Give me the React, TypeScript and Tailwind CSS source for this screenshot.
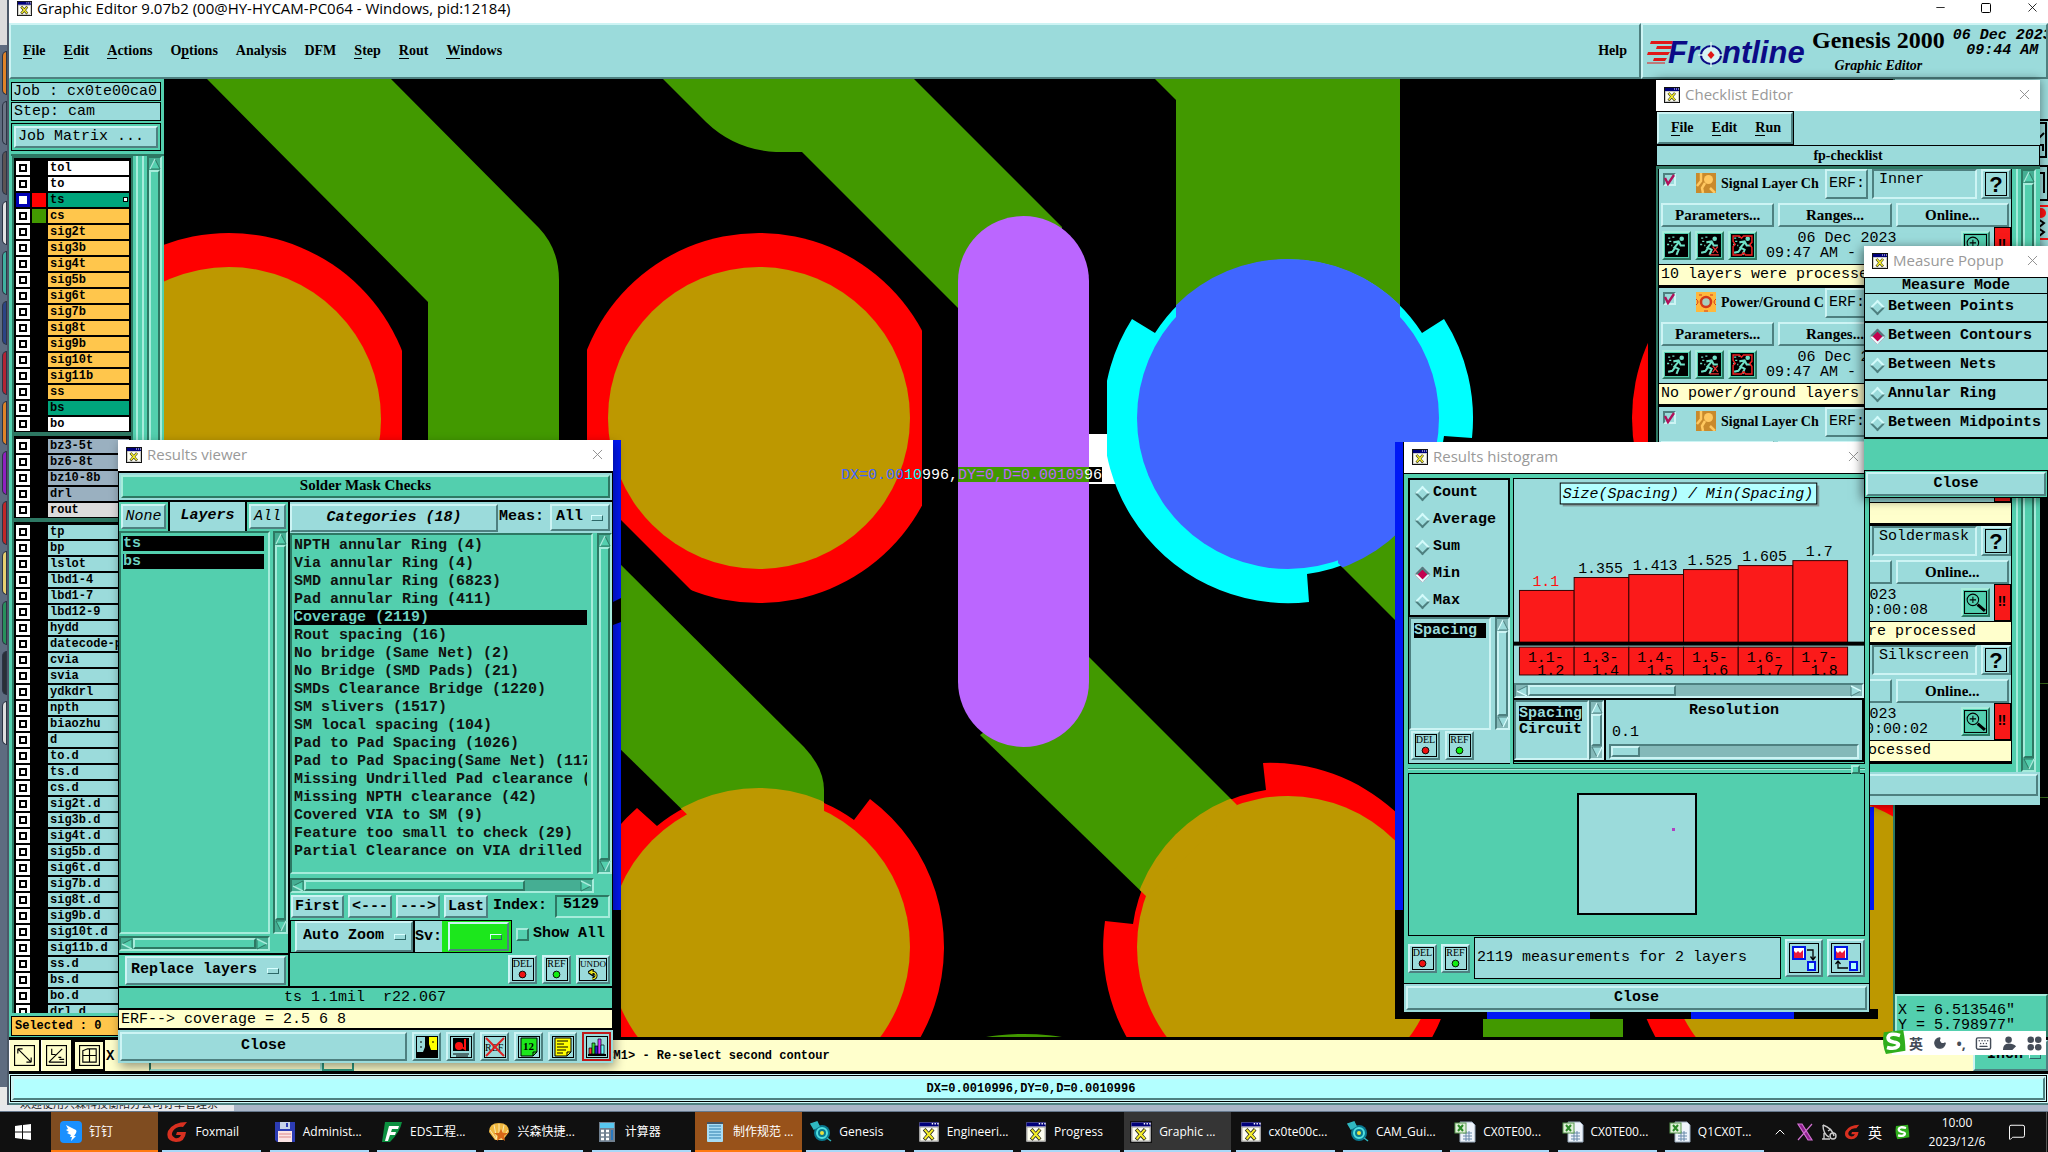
import React from 'react';
import { ChevronUp, Minus, Square, X, Moon, Keyboard, MessageSquare } from 'lucide-react';
import clsx from 'clsx';

const mono = "font-['Liberation_Mono','Noto_Sans_CJK_SC',monospace]";
const serif = "font-['Liberation_Serif',serif]";
const sans = "font-['Open_Sans','Noto_Sans_CJK_SC',sans-serif]";

const raised = 'border-2 border-t-[#cdf4f4] border-l-[#cdf4f4] border-r-[#4e8080] border-b-[#4e8080]';
const sunken = 'border-2 border-t-[#4e8080] border-l-[#4e8080] border-r-[#cdf4f4] border-b-[#cdf4f4]';
const raisedGreen = 'border-2 border-t-[#a6ecdb] border-l-[#a6ecdb] border-r-[#2d7863] border-b-[#2d7863]';
const sunkenGreen = 'border-2 border-t-[#2d7863] border-l-[#2d7863] border-r-[#a6ecdb] border-b-[#a6ecdb]';

/* ---------- small shared pieces ---------- */

const XIcon = ({ className = 'h-4 w-4' }: { className?: string }) => (
  <svg viewBox="0 0 16 16" className={clsx('shrink-0', className)}>
    <rect x="0.5" y="0.5" width="15" height="15" fill="#fff" stroke="#111" />
    <rect x="1" y="1" width="14" height="3" fill="#00007b" />
    <path d="M10 2h1M12 2h1M14 2h1" stroke="#fff" />
    <rect x="1.5" y="4.5" width="13" height="10" fill="#fffff0" stroke="#999" strokeWidth="0.5" />
    <path d="M4.5 6l6.5 7.5M11 6l-6.5 7.5" stroke="#222" strokeWidth="2.6" />
    <path d="M4.8 6.3l6 6.8M10.8 6.3l-6 6.8" stroke="#f5ee28" strokeWidth="1.5" />
  </svg>
);

const TitleBar = ({ title }: { title: string }) => (
  <div className={clsx(sans, 'flex h-[31px] items-center bg-white pr-[7px] pb-[2px] pl-2 text-[15px] text-[#999]')}>
    <XIcon />
    <span className="flex-1 pl-[5px] whitespace-nowrap">{title}</span>
    <button aria-label={`Close ${title}`} className="text-[#8a8a8a]">
      <X size={17} strokeWidth={1.3} />
    </button>
  </div>
);

const Arrow = ({ dir, green }: { dir: 'up' | 'down' | 'left' | 'right'; green?: boolean }) => {
  const rot = { up: 0, right: 90, down: 180, left: 270 }[dir];
  return (
    <svg viewBox="0 0 12 12" className="h-3 w-3 shrink-0">
      <g transform={`rotate(${rot} 6 6)`}>
        <path d="M6 1L11 11H1Z" fill={green ? '#53cfae' : '#9bdbdb'} stroke={green ? '#2d7863' : '#4e8080'} />
        <path d="M6 1L1 11" stroke={green ? '#a6ecdb' : '#d8ffff'} strokeWidth="1.4" />
      </g>
    </svg>
  );
};

const VScroll = ({ green }: { green?: boolean }) => (
  <div className={clsx('flex w-[15px] shrink-0 flex-col items-center', green ? 'bg-[#45ae93]' : 'bg-[#84b9b9]', green ? sunkenGreen : sunken)}>
    <Arrow dir="up" green={green} />
    <div className={clsx('w-[11px] flex-1', green ? raisedGreen : raised, green ? 'bg-[#53cfae]' : 'bg-[#9bdbdb]')} />
    <Arrow dir="down" green={green} />
  </div>
);

const HScroll = ({ green, thumb }: { green?: boolean; thumb: string }) => (
  <div className={clsx('flex h-[15px] items-center', green ? 'bg-[#45ae93]' : 'bg-[#84b9b9]', green ? sunkenGreen : sunken)}>
    <Arrow dir="left" green={green} />
    <div className="h-[11px] flex-1">
      <div className={clsx('h-full', thumb, green ? raisedGreen : raised, green ? 'bg-[#53cfae]' : 'bg-[#9bdbdb]')} />
    </div>
    <Arrow dir="right" green={green} />
  </div>
);

const OptionMenu = ({ label, value, className }: { label: string; value: string; className?: string }) => (
  <div className={clsx('relative', raised, className)}>
    <select aria-label={label} className="h-full w-full appearance-none bg-transparent pl-1 outline-none">
      <option>{value}</option>
    </select>
    <span className="pointer-events-none absolute top-1/2 right-[5px] h-[6px] w-3 -translate-y-1/2 border border-t-[#d8ffff] border-r-[#2d6868] border-b-[#2d6868] border-l-[#d8ffff]" />
  </div>
);

const DotButton = ({ text, color }: { text: string; color: string }) => (
  <button className={clsx(raised, serif, 'flex h-[29px] w-[29px] items-center justify-center bg-[#9bdbdb]')}>
    <span className="flex h-[23px] w-[22px] flex-col items-center border border-black text-[10px] leading-[10px]">
      {text}
      <svg viewBox="0 0 8 8" className="mt-px h-[9px] w-[9px]">
        <circle cx="4" cy="4" r="3" fill={color} stroke="#000" strokeWidth="0.8" />
      </svg>
    </span>
  </button>
);

const Radio = ({ name, label, checked }: { name: string; label: string; checked?: boolean }) => (
  <label className="flex h-full items-center gap-[5px] pl-[7px] whitespace-nowrap">
    <input
      type="radio"
      name={name}
      defaultChecked={checked}
      className="h-[11px] w-[11px] rotate-45 appearance-none border-2 border-t-[#d4fbfb] border-r-[#4e8080] border-b-[#4e8080] border-l-[#d4fbfb] checked:border-t-[#4e8080] checked:border-r-[#d4fbfb] checked:border-b-[#f4ffff] checked:border-l-[#4e8080] checked:bg-[#c4004e]"
    />
    {label}
  </label>
);

/* ---------- main window ---------- */

const menus: [string, number][] = [
  ['File', 0], ['Edit', 0], ['Actions', 0], ['Options', 1], ['Analysis', -1], ['DFM', -1], ['Step', 0], ['Rout', 0], ['Windows', 0],
];

const MenuLabel = ({ text, at }: { text: string; at: number }) =>
  at < 0 ? (
    <>{text}</>
  ) : (
    <>
      {text.slice(0, at)}
      <span className="border-b border-black">{text[at]}</span>
      {text.slice(at + 1)}
    </>
  );

const Logo = () => (
  <svg viewBox="0 0 162 30" className="mt-3 ml-1 h-[30px] w-[162px] shrink-0">
    <path d="M4 4h24l-2 3H3zM10 9h16l-2 3H9zM1 15h22l-2 3H0zM7 21h13l-2 3H6z" fill="#e01818" />
    <path d="M0 26h18" stroke="#e01818" />
    <g fill="#0b0b86" className="font-['Liberation_Sans',sans-serif] text-[31px] font-bold italic">
      <text x="21" y="26">Fr</text>
      <text x="75" y="26">ntline</text>
    </g>
    <ellipse cx="64" cy="18" rx="10" ry="9" fill="#d6f4f4" stroke="#0b0b86" strokeWidth="2" />
    <path d="M64 5v8M64 23v7M51 18h6M71 18h5" stroke="#d6f4f4" strokeWidth="1.5" />
    <path d="M64 14l3.500 4-3.500 4-3.500-4z" fill="#e01818" />
  </svg>
);

type Layer = { name: string; bg: string; swatch?: string; active?: boolean };
const W = 'bg-white';
const O = 'bg-[#ffc64c]';
const G = 'bg-[#00a57c]';
const B = 'bg-[#9ab0c0]';
const T = 'bg-[#9bdbdb]';
const board: Layer[] = [
  { name: 'tol', bg: W }, { name: 'to', bg: W },
  { name: 'ts', bg: G, swatch: 'bg-[#ff0000]', active: true },
  { name: 'cs', bg: O, swatch: 'bg-[#429900]' },
  ...['sig2t', 'sig3b', 'sig4t', 'sig5b', 'sig6t', 'sig7b', 'sig8t', 'sig9b', 'sig10t', 'sig11b', 'ss'].map((name) => ({ name, bg: O })),
  { name: 'bs', bg: G }, { name: 'bo', bg: W },
];
const drills: Layer[] = [
  ...['bz3-5t', 'bz6-8t', 'bz10-8b', 'drl'].map((name) => ({ name, bg: B })),
  { name: 'rout', bg: 'bg-[#dcdcdc]' },
];
const misc: Layer[] = [
  'tp', 'bp', 'lslot', 'lbd1-4', 'lbd1-7', 'lbd12-9', 'hydd', 'datecode-p', 'cvia', 'svia', 'ydkdrl', 'npth', 'biaozhu', 'd',
  'to.d', 'ts.d', 'cs.d', 'sig2t.d', 'sig3b.d', 'sig4t.d', 'sig5b.d', 'sig6t.d', 'sig7b.d', 'sig8t.d', 'sig9b.d', 'sig10t.d',
  'sig11b.d', 'ss.d', 'bs.d', 'bo.d', 'drl.d',
].map((name) => ({ name, bg: T }));

const LayerGroup = ({ layers }: { layers: Layer[] }) => (
  <ul className="flex flex-col gap-px border-2 border-[#2d7863] bg-black p-[2px] pb-px">
    {layers.map((l) => (
      <li key={l.name} className="flex h-[15px] items-center gap-[2px]">
        <input
          type="checkbox"
          aria-label={l.name}
          className={clsx(
            'h-[14px] w-[14px] shrink-0 appearance-none border-[3px] bg-white',
            l.active ? 'border-[#0000b4]' : 'border-white shadow-[inset_0_0_0_2px_#000]',
          )}
        />
        <span className={clsx('h-[14px] w-[14px] shrink-0', l.swatch)} />
        <button className={clsx('flex h-[14px] flex-1 items-center justify-between overflow-hidden pl-[2px] text-left text-[12px] leading-[14px] font-bold', l.bg)}>
          {l.name}
          {l.active && <span className="mr-px h-[5px] w-[5px] border border-black bg-white" />}
        </button>
      </li>
    ))}
  </ul>
);

const LayerPanel = () => (
  <aside className={clsx(mono, 'flex w-[155px] shrink-0 flex-col bg-[#53cfae] pt-[3px] pl-[2px]')}>
    <div className="mr-[3px] flex flex-col gap-px text-[15px] leading-[17px] whitespace-nowrap">
      <div className="border border-black bg-[#9bdbdb] pl-px">Job : cx0te00ca0</div>
      <div className="border border-black bg-[#9bdbdb] pl-[2px]">Step: cam</div>
      <div className="mt-px border border-black p-[2px]">
        <button className={clsx(raised, 'h-[22px] w-full bg-[#9bdbdb] pl-[2px] text-left leading-[18px]')}>Job Matrix ...</button>
      </div>
    </div>
    <div className="mt-[3px] flex min-h-0 flex-1 overflow-hidden border-t-2 border-[#2d7863]">
      <div className="flex w-[122px] flex-col overflow-hidden pl-px">
        <LayerGroup layers={board} />
        <LayerGroup layers={drills} />
        <LayerGroup layers={misc} />
      </div>
      <div className="mx-[3px] w-2 border-x-2 border-[#a6ecdb]" />
      <VScroll green />
    </div>
    <div className="mt-[3px] mb-[1px] border border-black bg-[#ffc64c] pl-[3px] text-[12px] leading-[18px] font-bold">Selected : 0</div>
  </aside>
);

const Canvas = () => (
  <svg viewBox="164 79 1729 958" preserveAspectRatio="xMinYMin slice" className="h-full min-w-0 flex-1 bg-black">
    <defs>
      <clipPath id="left-pad"><rect x="164" y="79" width="238" height="600" /></clipPath>
      <clipPath id="mid-pad"><path d="M587 79H922V700H801L587 486Z" /></clipPath>
      <clipPath id="blue-pad"><rect x="1107" y="200" width="400" height="500" /></clipPath>
      <clipPath id="traces">
        <path d="M1176 79H1400V330H1176Z" />
        <path d="M1338 563L1420 645V480H1338Z" />
        <path d="M613 557L804 747Q824 768 824 790V830H703L613 742Z" />
        <path d="M1089 657L1237 805L1147 897L980 735Z" />
      </clipPath>
    </defs>

    <g fill="#429900">
      <path d="M207 79H391L539 228Q559 249 559 280V700H428V302Z" />
      <path d="M663 79H914L1062 227V330H980L802 152H776Q735 150 706 122Z" />
      <path d="M1155 79H1400V330H1176V100Z" />
      <path d="M1338 563L1420 645V480H1338Z" />
      <path d="M613 557L804 747Q824 768 824 790V830H703L613 742Z" />
      <path d="M1089 657L1237 805L1147 897L980 735Z" />
      <ellipse cx="1024" cy="1050" rx="65" ry="16" />
      <rect x="1483" y="1000" width="140" height="40" />
    </g>

    <g fill="#f00">
      <circle cx="229" cy="419" r="186" clipPath="url(#left-pad)" />
      <circle cx="759" cy="418" r="185" clipPath="url(#mid-pad)" />
      <circle cx="1817" cy="418" r="185" />
      <circle cx="1817" cy="947" r="185" />
      <path d="M870 799A185 185 0 0 1 759 1132A185 185 0 0 1 637 808L657 826A158 158 0 0 1 686 807L704 830H824V803A158 158 0 0 1 854 820Z" />
      <path d="M1263 763A185 185 0 0 1 1288 1132A185 185 0 0 1 1105 921L1133 924A158 158 0 0 1 1266 790Z" />
    </g>
    <g fill="#bd9800">
      <circle cx="229" cy="419" r="152" />
      <circle cx="759" cy="418" r="151" />
      <circle cx="759" cy="947" r="151" />
      <circle cx="1288" cy="947" r="151" />
      <circle cx="1817" cy="947" r="151" />
      <g clipPath="url(#traces)">
        <circle cx="759" cy="947" r="159" />
        <circle cx="1288" cy="947" r="159" />
      </g>
    </g>

    <rect x="1089" y="434" width="50" height="50" fill="#fff" />
    <g clipPath="url(#blue-pad)">
      <path d="M1132 319A185 185 0 0 0 1309 602L1307 574A158 158 0 0 0 1444 436L1472 438A185 185 0 0 0 1444 319L1422 333A158 158 0 0 0 1155 333Z" fill="#0ff" />
    </g>
    <circle cx="1288" cy="418" r="151" fill="#4066ff" />
    <circle cx="1288" cy="418" r="159" fill="#4066ff" clipPath="url(#traces)" />

    <rect x="958" y="216" width="131" height="531" rx="65.500" fill="#bb66ff" />
    <rect x="958" y="467" width="131" height="15" fill="#429900" />
    <rect x="1089" y="467" width="13" height="15" fill="#000" />
    <text x="841" y="479" className="font-['Liberation_Mono',monospace] text-[15px]" fill="#4066ff">
      DX=0.00<tspan fill="#0ff">10</tspan><tspan fill="#fff">996,</tspan>
      <tspan x="958" fill="#bb66ff">DY=0,D=0.00109</tspan><tspan fill="#fff">96</tspan>
    </text>

    {/* drag frames left behind the floating windows */}
    <path d="M613 440H621V1037H613ZM1395 910H1403V1011H1878V798H1870V1019H1395ZM1870 790H1878V1019H1870ZM1648 79H1656V460H1648Z" fill="#000" />
    <path d="M1395 1009H1878V1019H1395Z" fill="#000" />
    <path d="M613 440H621V598L613 602ZM613 625L621 622V910H613ZM1395 442H1403V910H1395ZM1870 807H1874V910H1870ZM1487 1011H1590V1019H1487ZM1691 1011H1794V1019H1691Z" fill="#0018f5" />
  </svg>
);

const SidePanel = () => (
  <aside className={clsx(mono, 'flex w-[155px] shrink-0 flex-col border-l-2 border-[#2d7863] bg-[#9bdbdb]')}>
    <div className="flex h-[180px] flex-col items-end">
      <div className="h-[42px] w-full border-b-2 border-black" />
      <svg viewBox="0 0 10 120" className="h-[120px] w-[10px]">
        <g fill="none" stroke="#000" strokeWidth="2">
          <path d="M0 2h8v34h-8M0 18l6-6M0 24h5v6M0 45h10v34H0M0 52h6v20M0 98l6 4-6 5M0 107l6 4-6 5" />
        </g>
        <path d="M0 85h10M0 118h10" stroke="#f11" strokeWidth="2" />
        <circle cx="3" cy="92" r="5" fill="#f11" />
      </svg>
    </div>
    <div className="flex-1 bg-black pt-[424px]">
      <div className="mb-[113px] border-t border-[#3a6a1a]" />
      <div className="border-t border-[#3a6a1a]" />
    </div>
    <div className={clsx(raisedGreen, 'h-[43px] bg-[#53cfae] pt-[7px] pl-px text-[15px] leading-[15px] whitespace-pre')}>
      <div>X = 6.513546"</div>
      <div>Y = 5.798977"</div>
    </div>
  </aside>
);

const toolIcons = [
  'M4 4L18 18M4 4h5M4 4v5M18 18h-5M18 18v-5',
  'M3 18h16M3 18L17 4M6 4v6h4M13 13h3M14 15h5',
  'M4 6l5-2h9v14H4zM11 4v14M4 11h14',
];

const MessageRow = () => (
  <div className={clsx(mono, 'flex h-[37px] items-stretch border-y-[3px] border-black bg-[#ffffcc] text-[12px] font-bold')}>
    {toolIcons.map((d, i) => (
      <button
        key={d}
        aria-label={`Tool ${i + 1}`}
        className={clsx('flex w-8 items-center justify-center border-r-2 border-black', i === 2 ? 'border-2 border-[#2d9a80]' : 'border-l border-l-white')}
      >
        <svg viewBox="0 0 22 22" className="h-[21px] w-[21px]" fill="none" stroke="#000" strokeWidth="1.2">
          <rect x="0.6" y="0.600" width="20.800" height="20.800" />
          <path d={d} />
        </svg>
      </button>
    ))}
    <label htmlFor="coord" className="pl-px text-[14px] leading-[33px]">X</label>
    <input id="coord" className={clsx(sunkenGreen, 'ml-[35px] w-[173px] bg-[#ffffcc]')} />
    <button aria-label="Apply" className="w-8 border-2 border-[#2d9a80]">—</button>
    <p className="flex-1 truncate pl-[252px] leading-[33px]">&lt;M1&gt; - Re-select second contour</p>
    <OptionMenu label="Units" value="Inch" className="w-[75px] bg-[#53cfae] pl-2 text-[15px]" />
  </div>
);

const MainWindow = () => (
  <section className="flex min-w-0 flex-1 flex-col">
    <header className={clsx(sans, 'flex h-[23px] items-center bg-white pr-2 pl-2 text-[15px] leading-none text-black')}>
      <XIcon className="mb-[7px] h-[15px] w-[15px]" />
      <h1 className="mb-2 flex-1 pl-[5px] leading-[20px]">Graphic Editor 9.07b2 (00@HY-HYCAM-PC064 - Windows, pid:12184)</h1>
      <div className="mb-2 flex gap-[33px]">
        <button aria-label="Minimize"><Minus size={13} strokeWidth={1.5} /></button>
        <button aria-label="Maximize"><Square size={12} strokeWidth={2} /></button>
        <button aria-label="Close"><X size={15} strokeWidth={1.3} /></button>
      </div>
    </header>
    <div className={clsx(serif, 'flex h-14 bg-[#9bdbdb] text-[14px] font-bold')}>
      <nav className={clsx(raised, 'flex min-w-0 flex-1 items-center gap-[18px] px-3 pb-[2px]')}>
        {menus.map(([text, at]) => (
          <button key={text}><MenuLabel text={text} at={at} /></button>
        ))}
        <button className="ml-auto">Help</button>
      </nav>
      <div className={clsx(raised, 'flex w-[407px] shrink-0 overflow-hidden')}>
        <Logo />
        <div className="ml-[3px] text-center whitespace-nowrap">
          <div className="text-[24px] leading-[31px]">Genesis 2000</div>
          <div className="text-[14px] leading-[20px] italic">Graphic Editor</div>
        </div>
        <div className={clsx(mono, 'ml-[8px] pt-[3px] text-center text-[15px] leading-[15px] whitespace-nowrap italic')}>
          06 Dec 2023
          <br />
          09:44 AM
        </div>
      </div>
    </div>
    <div className="flex min-h-0 flex-1">
      <LayerPanel />
      <Canvas />
      <SidePanel />
    </div>
    <MessageRow />
    <footer className={clsx(mono, 'h-[31px] border-b-2 border-[#4e8080] bg-[#cffafa] p-px')}>
      <div className="h-full border border-black p-px">
        <div className={clsx(raised, 'flex h-full items-center justify-center bg-[#b3ffff] pl-[5px] text-[12px] font-bold')}>DX=0.0010996,DY=0,D=0.0010996</div>
      </div>
    </footer>
  </section>
);

/* ---------- results viewer ---------- */

const categories = [
  'NPTH annular Ring (4)', 'Via annular Ring (4)', 'SMD annular Ring (6823)', 'Pad annular Ring (411)', 'Coverage (2119)',
  'Rout spacing (16)', 'No bridge (Same Net) (2)', 'No Bridge (SMD Pads) (21)', 'SMDs Clearance Bridge (1220)', 'SM slivers (1517)',
  'SM local spacing (104)', 'Pad to Pad Spacing (1026)', 'Pad to Pad Spacing(Same Net) (117)', 'Missing Undrilled Pad clearance (12)',
  'Missing NPTH clearance (42)', 'Covered VIA to SM (9)', 'Feature too small to check (29)', 'Partial Clearance on VIA drilled',
];

const footerIcons: { name: string; art: React.ReactNode }[] = [
  { name: 'Contrast', art: <><path d="M11 1h10v20H11z" fill="#ff0" /><path d="M9 1h4v7l2 6h6v7H1v-5h6l2-5z" fill="#000" /><path d="M4 6h2M4 11h2M16 6h2" stroke="#000" /></> },
  { name: 'Snapshot', art: <><path d="M3 2h16v13H3z" fill="#000" /><circle cx="9" cy="10" r="4" fill="#f11" /><path d="M15 3v10l-5-3" stroke="#f11" strokeWidth="2" fill="none" /><path d="M3 18h16M6 20h12" stroke="#000" /></> },
  { name: 'Clear reference', art: <><text x="1" y="15" fontSize="10" fill="#000">REF</text><path d="M2 2l18 18M20 2L2 20" stroke="#d22" strokeWidth="2" /></> },
  { name: 'Number', art: <><path d="M3 2h16v14l-4 4H3z" fill="#1ce71c" stroke="#000" /><path d="M19 16h-4v4" fill="none" stroke="#000" /><text x="5" y="14" fontSize="11" fontWeight="bold" fill="#000">12</text></> },
  { name: 'Notes', art: <><path d="M3 2h16v14l-4 4H3z" fill="#ff0" stroke="#000" /><path d="M5 5h11M5 8h7M5 11h11M5 14h9M5 17h6M19 16h-4v4" stroke="#000" fill="none" /></> },
  { name: 'Histogram', art: <><path d="M2 19h18" stroke="#000" strokeWidth="2" /><g stroke="#000" strokeWidth="0.7"><path d="M3 12h3v6H3z" fill="#f33" /><path d="M6 7h3v11H6z" fill="#3d3" /><path d="M9 10h3v8H9z" fill="#22c" /><path d="M12 3h3v15h-3z" fill="#d3f" /><path d="M15 9h3v9h-3z" fill="#6ff" /></g></> },
];

const ResultsViewer = () => (
  <section className={clsx(mono, 'absolute top-[440px] left-[118px] w-[495px] bg-[#9bdbdb] text-[15px] shadow-[2px_4px_10px_#0006]')}>
    <TitleBar title="Results viewer" />
    <div className="border-x border-t-2 border-black">
      <div className="p-[2px]">
        <h2 className={clsx(serif, raisedGreen, 'h-[23px] bg-[#53cfae] text-center text-[15px] leading-[17px] font-bold')}>Solder Mask Checks</h2>
      </div>
      <div className="flex border-y-2 border-black bg-[#53cfae]">
        <div className="flex w-[171px] shrink-0 flex-col border-r-2 border-black">
          <div className="flex h-[29px] items-stretch italic">
            <div className="w-[49px] p-[2px]"><button className={clsx(raised, 'h-full w-full bg-[#9bdbdb] leading-none italic')}>None</button></div>
            <h3 className="flex-1 border-x-2 border-black bg-[#9bdbdb] text-center leading-[28px] font-bold">Layers</h3>
            <div className="w-[41px] p-[2px]"><button className={clsx(raised, 'h-full w-full bg-[#9bdbdb] leading-none italic')}>All</button></div>
          </div>
          <div className="flex flex-1 gap-[3px]">
            <ul className={clsx(sunkenGreen, 'flex flex-1 flex-col gap-[3px] py-[3px] pr-1 pl-[2px]')}>
              {['ts', 'bs'].map((l) => (
                <li key={l} className="h-[15px]">
                  <button className="block h-[15px] w-full bg-black text-left leading-[14px] font-bold text-[#6fd3c3]">{l}</button>
                </li>
              ))}
            </ul>
            <VScroll green />
          </div>
          <div className="my-[2px] mr-[18px]"><HScroll green thumb="w-full" /></div>
          <div className="border-t-2 border-black py-[1px] pr-[2px] pl-[6px]">
            <OptionMenu label="Layer mode" value="Replace layers" className="h-[29px] bg-[#9bdbdb] font-bold" />
          </div>
        </div>
        <div className="min-w-0 flex-1">
          <div className="flex h-[31px] items-center bg-[#9bdbdb] font-bold">
            <h3 className={clsx(raised, 'h-[28px] w-[208px] text-center leading-[24px] italic')}>Categories (18)</h3>
            <label htmlFor="meas" className="flex-1 pl-px">Meas:</label>
            <OptionMenu label="Measurements" value="All" className="mr-[2px] h-[27px] w-[60px]" />
          </div>
          <div className="flex gap-1">
            <ul className={clsx(sunkenGreen, 'h-[341px] min-w-0 flex-1 overflow-hidden pt-[2px] pr-1 pl-[2px]')}>
              {categories.map((c, i) => (
                <li key={c} className="h-[18px]">
                  <button
                    className={clsx(
                      'mt-px h-[15px] w-full overflow-hidden text-left align-top leading-[15px] font-bold whitespace-nowrap',
                      i === 4 ? 'bg-black text-[#6fd3c3]' : 'text-[#10120e]',
                    )}
                  >
                    {c}
                  </button>
                </li>
              ))}
            </ul>
            <VScroll green />
          </div>
          <div className="mt-1 mr-[18px]"><HScroll green thumb="w-[80%]" /></div>
          <div className="mt-[2px] flex items-center gap-1 pr-[2px] pl-px font-bold">
            {['First', '<---', '--->', 'Last'].map((b) => (
              <button key={b} className={clsx(raised, 'h-[23px] bg-[#9bdbdb] px-[2px] leading-[19px]')}>{b}</button>
            ))}
            <label htmlFor="index" className="pr-1 pl-px">Index:</label>
            <input id="index" defaultValue="5129" className={clsx(sunkenGreen, 'h-[23px] min-w-0 flex-1 bg-transparent pb-1 pl-[6px] outline-none')} />
          </div>
          <div className="mt-[2px] flex h-[33px] items-stretch font-bold">
            <div className="flex border border-black">
              <OptionMenu label="Zoom mode" value="Auto Zoom" className="ml-1 w-[118px] bg-[#9bdbdb] pl-[2px]" />
              <span className="border-l-2 border-black bg-[#9bdbdb] leading-[31px]">Sv:</span>
              <div className="w-[69px] bg-[#1ce71c] py-px pr-[2px] pl-[6px]">
                <OptionMenu label="Severity" value="" className="h-full" />
              </div>
            </div>
            <label className="flex items-center gap-1 pb-[5px] pl-1">
              <input type="checkbox" className={clsx(raisedGreen, 'h-[13px] w-[13px] appearance-none border')} />
              Show All
            </label>
          </div>
          <div className="flex h-[33px] items-center justify-end gap-[5px] pr-[2px]">
            <DotButton text="DEL" color="#e11" />
            <DotButton text="REF" color="#1e1" />
            <button className={clsx(raised, serif, 'flex h-[29px] w-[34px] items-center justify-center bg-[#9bdbdb]')}>
              <span className="flex h-[23px] w-[28px] flex-col items-center border border-black text-[9px] leading-[10px]">
                UNDO
                <svg viewBox="0 0 10 10" className="h-[11px] w-[11px]">
                  <path d="M1 3l3-2v4zM3 3c5-1 6 5 1 6" fill="none" stroke="#000" strokeWidth="2.600" />
                  <path d="M1.500 3l2-1.200v2.400zM3 3c5-1 6 5 1 6" fill="none" stroke="#ee2" strokeWidth="1.200" />
                </svg>
              </span>
            </button>
          </div>
        </div>
      </div>
      <p className="h-[20px] bg-[#53cfae] pr-px text-center leading-[20px] whitespace-pre">ts 1.1mil  r22.067</p>
      <p className="h-[22px] border-y-2 border-black bg-[#ffffcc] pl-[2px] leading-[19px]">ERF--&gt; coverage = 2.5 6 8</p>
    </div>
    <div className="flex gap-[5px] p-[2px]">
      <button className={clsx(raised, 'h-[29px] flex-1 text-[15px] font-bold')}>Close</button>
      {footerIcons.map((f) => (
        <button
          key={f.name}
          aria-label={f.name}
          className={clsx('flex h-[29px] w-[29px] items-center justify-center', f.name === 'Histogram' ? 'border-2 border-[#c01818]' : raised)}
        >
          <svg viewBox="0 0 22 22" className={clsx('h-[22px] w-[22px]', serif)}>
            <rect x="0.500" y="0.500" width="21" height="21" fill="#9bdbdb" stroke="#000" />
            {f.art}
          </svg>
        </button>
      ))}
    </div>
  </section>
);

/* ---------- checklist editor ---------- */

const checks = [
  { title: 'Signal Layer Ch', erf: 'Inner', time: '09:47 AM - 0:00:12', msg: '10 layers were processed' },
  { title: 'Power/Ground C', erf: 'Inner', time: '09:47 AM - 0:00:00', msg: 'No power/ground layers' },
  { title: 'Signal Layer Ch', erf: 'Outer', time: '09:47 AM - 0:00:04', msg: '' },
  { title: 'Solder Mask C', erf: 'Soldermask', time: '09:47 AM - 0:00:08', msg: '10 soldermask layers were processed' },
  { title: 'Silk Screen Ch', erf: 'Silkscreen', time: '09:47 AM - 0:00:02', msg: '2 legend layers were processed' },
];

const Runner = ({ kind }: { kind: number }) => (
  <button aria-label={`Run mode ${kind + 1}`} className={clsx(raisedGreen, 'h-[29px] w-[29px] bg-[#53cfae] p-px')}>
    <svg viewBox="0 0 22 22" className="h-full w-full">
      <rect width="22" height="22" fill="#000" />
      <g fill="none" stroke="#6fe0c6" strokeWidth="2">
        <path d="M14 7l-5 6 4 2-2 5M10 13l-3 4-4 1M8 8l5-1 2 4 4 0" />
      </g>
      <circle cx="16" cy="4.500" r="2.200" fill="#6fe0c6" />
      <path d="M3 4h2M7 3h2M4 7h2M2 10h2M6 11h1" stroke="#6fe0c6" strokeWidth="1.300" />
      {kind === 1 && <path d="M14 12l5 6M19 12l-5 6M11 20h9" stroke="#e33" strokeWidth="1.200" />}
      {kind === 2 && <path d="M2 2h6l2 2 2-2h8v6l-2 2 2 3v7h-6l-2-2-2 2H2v-8l2-2-2-3z" fill="none" stroke="#e22" strokeWidth="1.400" />}
    </svg>
  </button>
);

const CheckIcon = ({ power }: { power: boolean }) => (
  <svg viewBox="0 0 20 20" className="h-5 w-5 shrink-0">
    <rect width="20" height="20" fill={power ? '#ffb83c' : '#c98a2c'} />
    {power ? (
      <>
        <circle cx="10" cy="10" r="5" fill="#a8cfc0" stroke="#d43a1a" strokeWidth="2.500" />
        <path d="M0 7q4 3 0 6M20 7q-4 3 0 6M3 3h3M14 3h3M8 19h4" stroke="#d43a1a" fill="none" />
      </>
    ) : (
      <>
        <circle cx="12.500" cy="6.500" r="4.500" fill="#ffc860" />
        <path d="M5 0v8l-4 5M9 10l-3 5 1 5M14 15l5 5" stroke="#ffc860" strokeWidth="2.500" fill="none" />
      </>
    )}
  </svg>
);

const ChecklistEditor = () => (
  <section className={clsx(mono, 'absolute top-20 right-2 w-[384px] bg-[#9bdbdb] text-[15px] shadow-[0_0_10px_#0007]')}>
    <TitleBar title="Checklist Editor" />
    <nav className={clsx(serif, 'border-l border-black text-[14px] font-bold')}>
      <div className="w-[137px] border-t border-r border-b border-black">
        <div className={clsx(raised, 'flex h-8 items-center gap-[18px] pb-[2px] pl-3')}>
          {['File', 'Edit', 'Run'].map((m) => (
            <button key={m}><MenuLabel text={m} at={0} /></button>
          ))}
        </div>
      </div>
      <h2 className="border border-l-0 border-black text-center leading-[19px]">fp-checklist</h2>
    </nav>
    <div className="flex gap-[3px] border-t-[3px] border-[#2d7863] bg-[#53cfae] pr-1">
      <div className="w-[362px] shrink-0 border-r-2 border-l-2 border-[#2d7863] border-r-[#a6ecdb] pb-2">
        {checks.map((c, i) => (
          <article key={i} className="mr-1 border border-t-0 border-b-[3px] border-black bg-[#9bdbdb]">
            <div className="flex h-[30px] items-start overflow-hidden pl-1">
              <span className="relative mt-1">
                <input type="checkbox" defaultChecked aria-label={c.title} className={clsx(sunken, 'block h-[13px] w-[13px] appearance-none border')} />
                <svg viewBox="0 0 13 13" className="pointer-events-none absolute top-0 left-0 h-[13px] w-[13px]">
                  <path d="M2 5l3 6 6-9" fill="none" stroke="#b0105a" strokeWidth="2.400" />
                </svg>
              </span>
              <span className="mt-1 mr-[5px] ml-5"><CheckIcon power={i === 1} /></span>
              <h3 className={clsx(serif, 'w-[101px] pt-[6px] text-[14px] leading-[18px] font-bold whitespace-nowrap')}>{c.title}</h3>
              <label htmlFor={`erf-${i}`} className={clsx(raised, 'ml-[3px] h-[30px] w-[43px] pl-[2px] leading-[26px]')}>ERF:</label>
              <input id={`erf-${i}`} defaultValue={c.erf} className={clsx(sunken, 'ml-1 h-[30px] w-[105px] bg-transparent pb-[10px] pl-[5px] outline-none')} />
              <button aria-label="Help" className={clsx(raised, 'ml-1 flex h-[30px] w-[30px] items-center justify-center')}>
                <span className="h-[24px] w-[22px] border border-black font-['Liberation_Sans',sans-serif] text-[22px] leading-[23px] font-bold">?</span>
              </button>
            </div>
            <div className={clsx(serif, 'mt-1 flex h-[24px] gap-1 px-[2px] text-[15px] font-bold')}>
              {['Parameters...', 'Ranges...', 'Online...'].map((b) => (
                <button key={b} className={clsx(raised, 'flex-1 leading-[18px]')}>{b}</button>
              ))}
            </div>
            <div className="flex h-[37px] items-center gap-1 pl-[3px]">
              <Runner kind={0} />
              <Runner kind={1} />
              <Runner kind={2} />
              <p className="w-[172px] text-center leading-[15px] whitespace-nowrap">
                06 Dec 2023
                <br />
                {c.time}
              </p>
              <button aria-label="Zoom results" className={clsx(raisedGreen, 'ml-auto h-[29px] w-[29px] bg-[#53cfae] p-px')}>
                <svg viewBox="0 0 22 22" className="h-full w-full" fill="none" stroke="#000">
                  <rect x="0.500" y="0.500" width="21" height="21" />
                  <circle cx="8.500" cy="8.500" r="5.500" />
                  <path d="M8.500 5.500v6M5.500 8.500h6" />
                  <path d="M13 13l7 6" strokeWidth="3" />
                </svg>
              </button>
              <span className="h-full w-[17px] border border-black bg-[#f81818] pr-px text-center text-[14px] leading-[34px] font-bold">‼</span>
            </div>
            <p className="h-[21px] overflow-hidden border-t border-black bg-[#ffffcc] pl-[2px] leading-[19px] whitespace-nowrap">{c.msg}</p>
          </article>
        ))}
      </div>
      <VScroll green />
    </div>
    <div className="p-[2px]">
      <button aria-label="Close checklist" className={clsx(raised, 'h-[22px] w-full')} />
    </div>
  </section>
);

/* ---------- histogram ---------- */

const bars = [
  { v: '1.1', h: 53, a: '1.1-', b: '1.2' },
  { v: '1.355', h: 66, a: '1.3-', b: '1.4' },
  { v: '1.413', h: 69, a: '1.4-', b: '1.5' },
  { v: '1.525', h: 74, a: '1.5-', b: '1.6' },
  { v: '1.605', h: 78, a: '1.6-', b: '1.7' },
  { v: '1.7', h: 83, a: '1.7-', b: '1.8' },
];

const Chart = () => (
  <svg viewBox="0 0 352 204" className="block h-[204px] w-full bg-[#9bdbdb] font-['Liberation_Mono',monospace] text-[15px]">
    <rect x="49" y="6" width="258" height="21" fill="#7e9a9a" />
    <rect x="46.500" y="3.500" width="258" height="21" fill="#b3ffff" stroke="#000" />
    <text x="49" y="19" fontStyle="italic">Size(Spacing) / Min(Spacing)</text>
    {bars.map((b, i) => (
      <g key={b.v} textAnchor="middle">
        <rect x={5.5 + i * 55} y={164.5 - b.h} width="55" height={b.h} fill="#fb1a1a" stroke="#300" />
        <text x={32 + i * 55} y={160 - b.h} fill={i === 0 ? '#f11' : '#000'}>{b.v}</text>
        <rect x={5.5 + i * 55} y="168.500" width="55" height="28" fill="#fb1a1a" stroke="#300" />
        <text x={32 + i * 55} y="183">{b.a}</text>
        <text x={37 + i * 55} y="197">{b.b}</text>
      </g>
    ))}
    <rect y="163" width="352" height="4" />
  </svg>
);

const WindowSwap = ({ up }: { up?: boolean }) => (
  <button aria-label={up ? 'Restore view' : 'Send view'} className={clsx(raised, 'flex h-[38px] w-[38px] items-center justify-center bg-[#9bdbdb]')}>
    <svg viewBox="0 0 30 30" className="h-[30px] w-[30px]">
      <rect x="0.500" y="0.500" width="29" height="29" fill="none" stroke="#000" />
      <rect x="4" y="4" width="12" height="12" fill="#fff" stroke="#0018e8" strokeWidth="2" />
      <path d="M5 15V8l2 2 2-2 2 2 3-3v8z" fill="#e8183c" />
      <rect x="19" y="19" width="7" height="8" fill="#b3ffff" stroke="#0018e8" strokeWidth="2" />
      {up ? <path d="M17 25H7v-6M4.500 21L7 18l2.500 3" fill="none" stroke="#000" strokeWidth="1.300" /> : <path d="M18 7h6v9M21.500 13.500L24 17l2.500-3.500" fill="none" stroke="#000" strokeWidth="1.300" />}
    </svg>
  </button>
);

const ResultsHistogram = () => (
  <section className={clsx(mono, 'absolute top-[442px] right-[178px] w-[467px] border-x border-black bg-[#53cfae] text-[15px]')}>
    <TitleBar title="Results histogram" />
    <div className="border-t border-black p-1">
      <div className="flex gap-[3px]">
        <div className="flex w-[102px] shrink-0 flex-col bg-[#9bdbdb]">
          <fieldset className="border-2 border-black font-bold">
            {['Count', 'Average', 'Sum', 'Min', 'Max'].map((m) => (
              <div key={m} className="h-[27px]"><Radio name="stat" label={m} checked={m === 'Min'} /></div>
            ))}
          </fieldset>
          <div className="flex h-[113px] justify-between border-l border-black">
            <div className={clsx(sunken, 'w-[82px] pt-[4px] pl-[3px]')}>
              <button className="block h-[15px] w-[72px] bg-black text-left leading-[14px] font-bold text-[#9bdbdb]">Spacing</button>
            </div>
            <VScroll />
          </div>
          <div className="flex gap-[5px] border-b border-l border-black px-[2px] pt-px pb-[3px]">
            <DotButton text="DEL" color="#e11" />
            <DotButton text="REF" color="#1e1" />
          </div>
        </div>
        <div className="min-w-0 flex-1 border border-black">
          <Chart />
          <HScroll thumb="w-[46%]" />
          <div className="flex h-[64px] border-t-2 border-b-2 border-black bg-[#9bdbdb]">
            <div className={clsx(sunken, 'w-[75px] pt-[4px] pl-[3px] leading-[18px] font-bold')}>
              <button className="block h-[15px] w-[63px] bg-black text-left leading-[14px] text-[#9bdbdb]">Spacing</button>
              <button className="block">Circuit</button>
            </div>
            <VScroll />
            <div className="flex flex-1 flex-col border-r-2 border-l-2 border-black px-[3px] font-bold">
              <label htmlFor="resolution" className="text-center leading-[22px]">Resolution</label>
              <output className="pl-[3px] font-normal leading-[22px]">0.1</output>
              <input
                id="resolution"
                type="range"
                defaultValue={0}
                className={clsx(sunken, 'h-[15px] w-full appearance-none bg-[#84b9b9] [&::-webkit-slider-thumb]:h-[11px] [&::-webkit-slider-thumb]:w-[29px] [&::-webkit-slider-thumb]:appearance-none [&::-webkit-slider-thumb]:border-2 [&::-webkit-slider-thumb]:border-t-[#cdf4f4] [&::-webkit-slider-thumb]:border-r-[#4e8080] [&::-webkit-slider-thumb]:border-b-[#4e8080] [&::-webkit-slider-thumb]:border-l-[#cdf4f4] [&::-webkit-slider-thumb]:bg-[#9bdbdb]')}
              />
            </div>
          </div>
        </div>
      </div>
      <div className="relative mt-[4px] mb-[3px] border-t border-b border-[#2d7863] border-b-[#a6ecdb]">
        <span className={clsx(raisedGreen, 'absolute -top-1 right-[5px] h-[9px] w-[9px] bg-[#53cfae]')} />
      </div>
      <div className="flex justify-center border border-black pt-[19px] pb-5">
        <svg viewBox="0 0 120 122" className="h-[122px] w-[120px]">
          <rect x="1" y="1" width="118" height="120" fill="#9bdbdb" stroke="#000" strokeWidth="2" />
          <rect x="95" y="35" width="3" height="3" fill="#b040c0" />
        </svg>
      </div>
      <div className="mt-px flex items-center gap-[4px]">
        <DotButton text="DEL" color="#e11" />
        <DotButton text="REF" color="#1e1" />
        <p className="h-[42px] flex-1 border border-black bg-[#9bdbdb] pl-[2px] leading-[40px] whitespace-nowrap">2119 measurements for 2 layers</p>
        <WindowSwap />
        <WindowSwap up />
      </div>
    </div>
    <div className="border-t border-black bg-[#9bdbdb] p-[2px]">
      <button className={clsx(raised, 'h-6 w-full leading-[18px] font-bold')}>Close</button>
    </div>
  </section>
);

/* ---------- measure popup ---------- */

const MeasurePopup = () => (
  <section className={clsx(mono, 'absolute top-[246px] right-0 w-[184px] bg-[#53cfae] text-[15px] font-bold shadow-[-2px_2px_10px_#0008]')}>
    <div className="font-normal"><TitleBar title="Measure Popup" /></div>
    <fieldset className="w-full border-x border-black bg-[#9bdbdb]">
      <h2 className="border-t border-b border-black text-center leading-[15px]">Measure Mode</h2>
      {['Between Points', 'Between Contours', 'Between Nets', 'Annular Ring', 'Between Midpoints'].map((m) => (
        <div key={m} className="h-[29px] border-b-2 border-black"><Radio name="measure" label={m} checked={m === 'Between Contours'} /></div>
      ))}
    </fieldset>
    <div className="mt-[31px] border border-black p-px">
      <button className={clsx(raised, 'h-[24px] w-full bg-[#9bdbdb] leading-[20px]')}>Close</button>
    </div>
  </section>
);

/* ---------- desktop chrome ---------- */

const desktopIcons = [
  'bg-[#e08428]', 'bg-[#6b7585]', 'bg-[#5c5454]', 'bg-[#e2e2e2]', 'bg-[#40b0a0]', 'bg-[#2c4484]', 'bg-[#b42434]', 'bg-[#e08428]',
  'bg-[#9020c0]', 'bg-[#c02828]', 'bg-[#e8d070]', 'bg-[#28905c]', 'bg-[#2a3038]', 'bg-[#dedede]',
];

const DesktopStrip = () => (
  <div className="flex w-[9px] shrink-0 flex-col gap-[6px] overflow-hidden border-r-2 border-r-[#4c5868] bg-[#5e6c80]">
    <div className="h-[45px] shrink-0 bg-[#dcdcdc]" />
    {desktopIcons.map((c, i) => (
      <span key={i} className={clsx('ml-[2px] h-[44px] shrink-0 rounded-l-md border border-[#2c3444]', c)} />
    ))}
    <span className="mt-auto h-[18px] shrink-0 bg-[#e8e8e8]" />
  </div>
);

const taskIcons: Record<string, React.ReactNode> = {
  ding: <><rect width="22" height="22" rx="4" fill="#1a90ff" /><path d="M6 4l10 5q1 1 0 3l-2 3h2l-5 5 1-4h-2l1-2-4-2 2-1-3-2 2-1z" fill="#fff" /></>,
  fox: <path d="M21 1q-14 0-19 9-3 10 8 11 9 0 10-10h-9l-1 3h5q-2 4-6 3-5-2-2-7 4-5 10-4z" fill="#d83020" />,
  disk: <><path d="M1 1h20v20H3l-2-2z" fill="#2c3cb4" /><path d="M6 1h10v7H6z" fill="#c8d4e8" /><path d="M12 2h2v4h-2z" fill="#2c3cb4" /><path d="M4 10h14v11H4z" fill="#fbe4e4" /><path d="M5 13h12M5 16h12" stroke="#d88" /></>,
  eds: <><path d="M4 1h17q-2 10-12 20H1z" fill="#0c9040" /><path d="M8 5h10l-1 3h-6l-1 3h5l-1 3H9l-2 6H4z" fill="#fff" /></>,
  shell: <><path d="M11 2q10 0 10 9l-6 8H7l-6-8q0-9 10-9z" fill="#f0b840" /><path d="M11 3v16M6 4l3 15M16 4l-3 15M2 9l6 9M20 9l-6 9" stroke="#fbe8b0" /><path d="M13 8l2 4 5 0-4 3 1 5-4-3-4 3 1-5-4-3h5z" fill="#d86818" /></>,
  calc: <><rect x="3" y="1" width="16" height="20" fill="#708090" /><rect x="4" y="2" width="14" height="5" fill="#58c8f0" /><path d="M5 10h3M10 10h3M5 14h3M10 14h3M5 18h3M10 18h3" stroke="#fff" strokeWidth="2.500" /><path d="M15 9h2v10h-2z" fill="#2878c0" /></>,
  note: <><rect x="3" y="1" width="16" height="20" rx="1" fill="#a8dcf4" /><path d="M5 5h12M5 8h12M5 11h12M5 14h12M5 17h12" stroke="#2c7cac" /><path d="M3 2h16" stroke="#456" strokeWidth="2" /></>,
  gen: <><circle cx="12" cy="12" r="8" fill="#087890" /><circle cx="12" cy="12" r="5" fill="none" stroke="#50e0e0" strokeWidth="2" /><circle cx="12" cy="12" r="2" fill="#e8e040" /><path d="M1 3l6-2 2 4-5 3zM17 17l4 3" fill="#30b8c0" stroke="#30b8c0" strokeWidth="1.500" /></>,
  xls: <><path d="M6 1h12l3 3v17H6z" fill="#eef4fb" stroke="#9ab" /><path d="M9 12h9M9 15h9M9 18h9M12 10v10M15 10v10" stroke="#68a" /><rect x="1" y="2" width="11" height="10" fill="#dff0d8" stroke="#5a9a50" /><path d="M4 4l5 6M9 4l-5 6" stroke="#2c8a28" strokeWidth="2" /></>,
};

const tasks: { label: string; icon: string; tone?: 'orange' | 'brown' | 'active' }[] = [
  { label: '钉钉', icon: 'ding', tone: 'brown' },
  { label: 'Foxmail', icon: 'fox' },
  { label: 'Administ...', icon: 'disk' },
  { label: 'EDS工程...', icon: 'eds' },
  { label: '兴森快捷...', icon: 'shell' },
  { label: '计算器', icon: 'calc' },
  { label: '制作规范 ...', icon: 'note', tone: 'orange' },
  { label: 'Genesis', icon: 'gen' },
  { label: 'Engineeri...', icon: 'x' },
  { label: 'Progress', icon: 'x' },
  { label: 'Graphic ...', icon: 'x', tone: 'active' },
  { label: 'cx0te00c...', icon: 'x' },
  { label: 'CAM_Gui...', icon: 'gen' },
  { label: 'CX0TE00...', icon: 'xls' },
  { label: 'CX0TE00...', icon: 'xls' },
  { label: 'Q1CX0T...', icon: 'xls' },
];

const SogouMark = ({ className }: { className: string }) => (
  <svg viewBox="0 0 24 24" className={className}>
    <path d="M3 3L21 1Q23 12 23 20L5 23Q1 14 3 3Z" fill="#2fae1c" />
    <path d="M18 6Q8 3 7 8Q7 11 12 12Q18 13 16 16Q13 19 6 17" fill="none" stroke="#fff" strokeWidth="3.400" />
  </svg>
);

const Taskbar = () => (
  <footer className={clsx(sans, 'flex h-10 shrink-0 bg-[#101010] text-[12px] text-white')}>
    <button aria-label="Start" className="flex w-[51px] items-center pl-[15px]">
      <svg viewBox="0 0 16 16" className="h-4 w-4" fill="#fff">
        <path d="M0 2l7-1v6.500H0zM8 1l8-1v7.500H8zM0 8.500h7V15l-7-1zM8 8.500h8V16l-8-1z" />
      </svg>
    </button>
    <div className="flex max-w-[1717px] min-w-0 flex-1">
      {tasks.map((t, i) => (
        <button
          key={i}
          className={clsx('flex min-w-0 flex-1 items-end justify-center', t.tone === 'brown' && 'bg-[#7f4c20]', t.tone === 'orange' && 'bg-[#98521a]', t.tone === 'active' && 'bg-[#353535]')}
        >
          <span
            className={clsx(
              'flex h-10 items-center gap-[7px] overflow-hidden border-b-2 pt-[2px] text-left whitespace-nowrap',
              t.tone === 'brown' || t.tone === 'orange' ? 'w-full border-[#ff7a10] pl-[9px]' : t.tone === 'active' ? 'w-full border-[#a9d8f8] pl-[6px]' : 'w-[99px] border-[#a9d8f8] pl-1',
            )}
          >
            {t.icon === 'x' ? <XIcon className="h-[22px] w-[22px]" /> : <svg viewBox="0 0 22 22" className="h-[24px] w-[22px] shrink-0">{taskIcons[t.icon]}</svg>}
            {t.label}
          </span>
        </button>
      ))}
    </div>
    <div className="ml-auto flex items-center pr-px">
      <button aria-label="Show hidden icons" className="mr-2"><ChevronUp size={16} strokeWidth={1.5} /></button>
      <svg viewBox="0 0 18 18" className="h-[18px] w-[18px]"><path d="M2 1h4l10 16h-4zM16 1L2 17" fill="#902090" stroke="#d070d0" strokeWidth="1.200" /></svg>
      <svg viewBox="0 0 18 18" className="ml-[6px] h-[18px] w-[18px]" fill="none" stroke="#ccc" strokeWidth="1.400"><path d="M3 2q0 9 6 12M3 2q9 3 11 11M4 10v6M2 16h8M8 8l3-2" /><circle cx="13" cy="13" r="3" /></svg>
      <svg viewBox="0 0 22 22" className="ml-[6px] h-4 w-4">{taskIcons.fox}</svg>
      <span className="mx-[8px] text-[14px]">英</span>
      <SogouMark className="ml-1 h-[18px] w-4" />
      <time className="mx-4 w-[62px] text-center leading-[19px]">
        10:00
        <br />
        2023/12/6
      </time>
      <button aria-label="Notifications" className="mr-[20px] ml-1"><MessageSquare size={18} strokeWidth={1.3} /></button>
      <span className="h-10 border-l border-[#555]" />
    </div>
  </footer>
);

const InputBar = () => (
  <div className={clsx(sans, 'absolute right-[2px] bottom-[97px] flex h-[24px] w-[154px] items-center justify-between bg-white pr-1 pl-[17px] text-[14px] font-bold text-[#444c58]')}>
    <SogouMark className="absolute bottom-0 -left-3 h-[26px] w-[27px]" />
    <span>英</span>
    <Moon size={14} fill="#444c58" />
    <span>•,</span>
    <Keyboard size={17} />
    <svg viewBox="0 0 16 16" className="h-[15px] w-[15px]" fill="#444c58"><circle cx="7" cy="4" r="3.500" /><path d="M1 15q0-7 6-7 5 0 8 3l-4 4z" /></svg>
    <svg viewBox="0 0 16 16" className="h-[15px] w-[15px]" fill="#444c58"><circle cx="4" cy="4" r="3.500" /><circle cx="12" cy="4" r="3.500" /><circle cx="4" cy="12" r="3.500" /><circle cx="12" cy="12" r="3.500" /></svg>
  </div>
);

export default function App() {
  return (
    <div className="relative flex h-screen w-full flex-col overflow-hidden bg-[#a9b6c8]">
      <div className="flex min-h-0 flex-1">
        <DesktopStrip />
        <MainWindow />
      </div>
      <div className={clsx(sans, 'flex h-[7px] shrink-0 items-end overflow-hidden border-b border-[#66788c] text-[11px] leading-[14px] text-[#222]')}>
        <span className="w-[234px] bg-[#e6e8ec] pl-5 whitespace-nowrap">欢迎使用兴森科技衡阳分公司订单管理系</span>
      </div>
      <Taskbar />
      <ResultsViewer />
      <ChecklistEditor />
      <ResultsHistogram />
      <MeasurePopup />
      <InputBar />
    </div>
  );
}
